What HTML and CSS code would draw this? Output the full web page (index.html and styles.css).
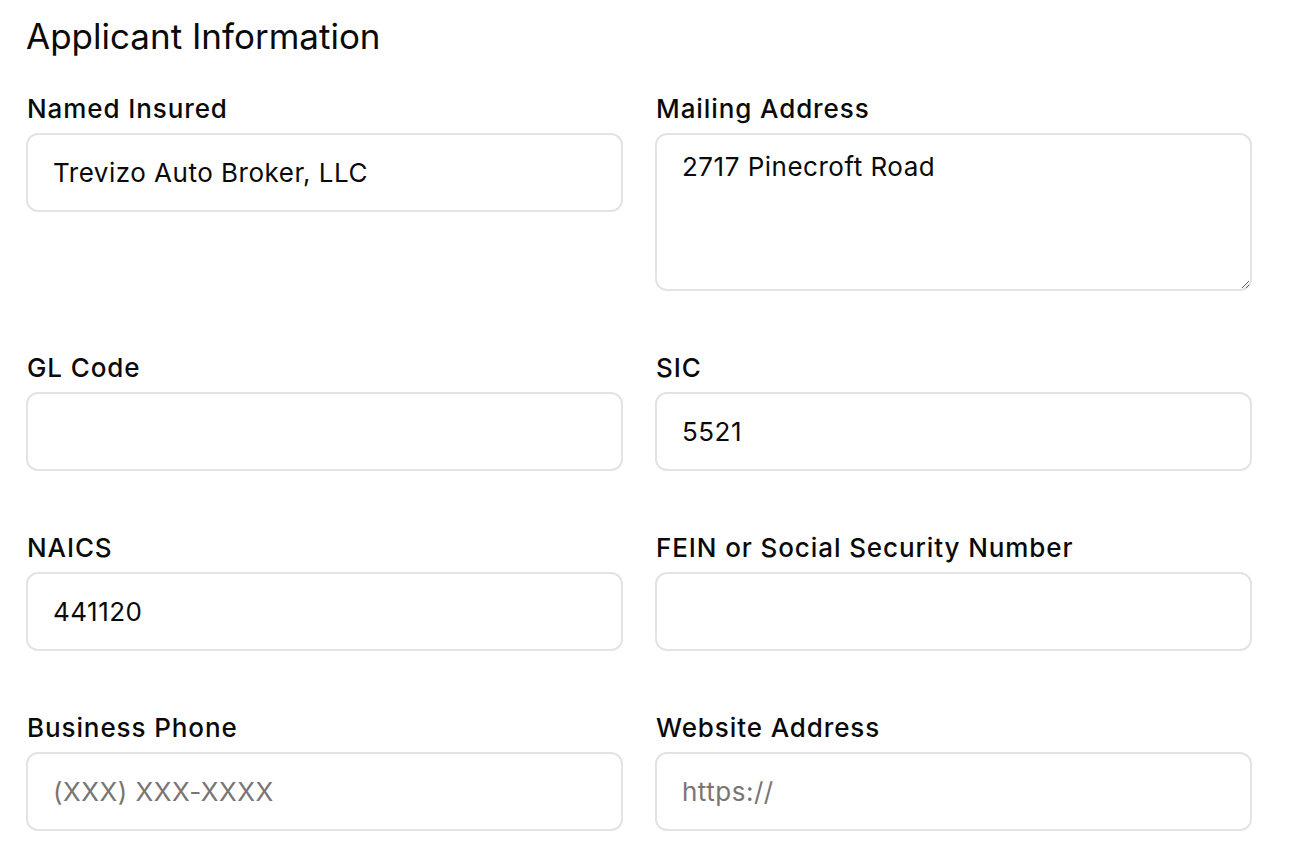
FILE: index.html
```html
<!DOCTYPE html>
<html lang="en">
<head>
<meta charset="utf-8">
<title>Applicant Information</title>
<link rel="stylesheet" href="styles.css">
</head>
<body>
<section class="form">
  <h1 class="title">Applicant Information</h1>
  <div class="grid">
    <div class="field">
      <label class="label" for="named">Named Insured</label>
      <input class="input" id="named" type="text" value="Trevizo Auto Broker, LLC">
    </div>
    <div class="field">
      <label class="label" for="mail">Mailing Address</label>
      <textarea class="input textarea" id="mail">2717 Pinecroft Road</textarea>
    </div>
    <div class="field">
      <label class="label" for="gl">GL Code</label>
      <input class="input" id="gl" type="text">
    </div>
    <div class="field">
      <label class="label" for="sic">SIC</label>
      <input class="input" id="sic" type="text" value="5521">
    </div>
    <div class="field">
      <label class="label" for="naics">NAICS</label>
      <input class="input" id="naics" type="text" value="441120">
    </div>
    <div class="field">
      <label class="label" for="fein">FEIN or Social Security Number</label>
      <input class="input" id="fein" type="text">
    </div>
    <div class="field">
      <label class="label" for="phone">Business Phone</label>
      <input class="input" id="phone" type="text" placeholder="(XXX) XXX-XXXX">
    </div>
    <div class="field">
      <label class="label" for="web">Website Address</label>
      <input class="input" id="web" type="text" placeholder="https://">
    </div>
  </div>
</section>
</body>
</html>
```

FILE: styles.css
```css
html, body {
  margin: 0;
  padding: 0;
  background: #ffffff;
}
body {
  font-family: Inter, "Noto Sans", Roboto, sans-serif;
  color: #0a0a0a;
}
.form {
  width: 1226px;
  padding: 14px 0 0 26px;
}
.title {
  margin: 0;
  font-size: 35px;
  line-height: 44px;
  font-weight: 400;
}
.grid {
  margin-top: 35px;
  display: grid;
  grid-template-columns: 1fr 1fr;
  column-gap: 32px;
  row-gap: 61px;
  align-items: start;
}
.field {
  display: flex;
  flex-direction: column;
  gap: 8px;
}
.label {
  font-size: 26px;
  line-height: 32px;
  font-weight: 450;
  letter-spacing: 0.9px;
  padding-left: 1px;
}
.input {
  box-sizing: border-box;
  height: 79px;
  width: 100%;
  border: 2px solid #e3e3e3;
  border-radius: 12px;
  padding: 0 25px;
  font-family: Inter, Roboto, sans-serif;
  font-size: 26px;
  letter-spacing: 0.5px;
  color: #0a0a0a;
  background: #ffffff;
  outline: none;
}
.input::placeholder {
  color: #7a7572;
}
.textarea {
  height: 158px;
  padding: 14px 25px;
  line-height: 36px;
  resize: vertical;
  display: block;
}
```
